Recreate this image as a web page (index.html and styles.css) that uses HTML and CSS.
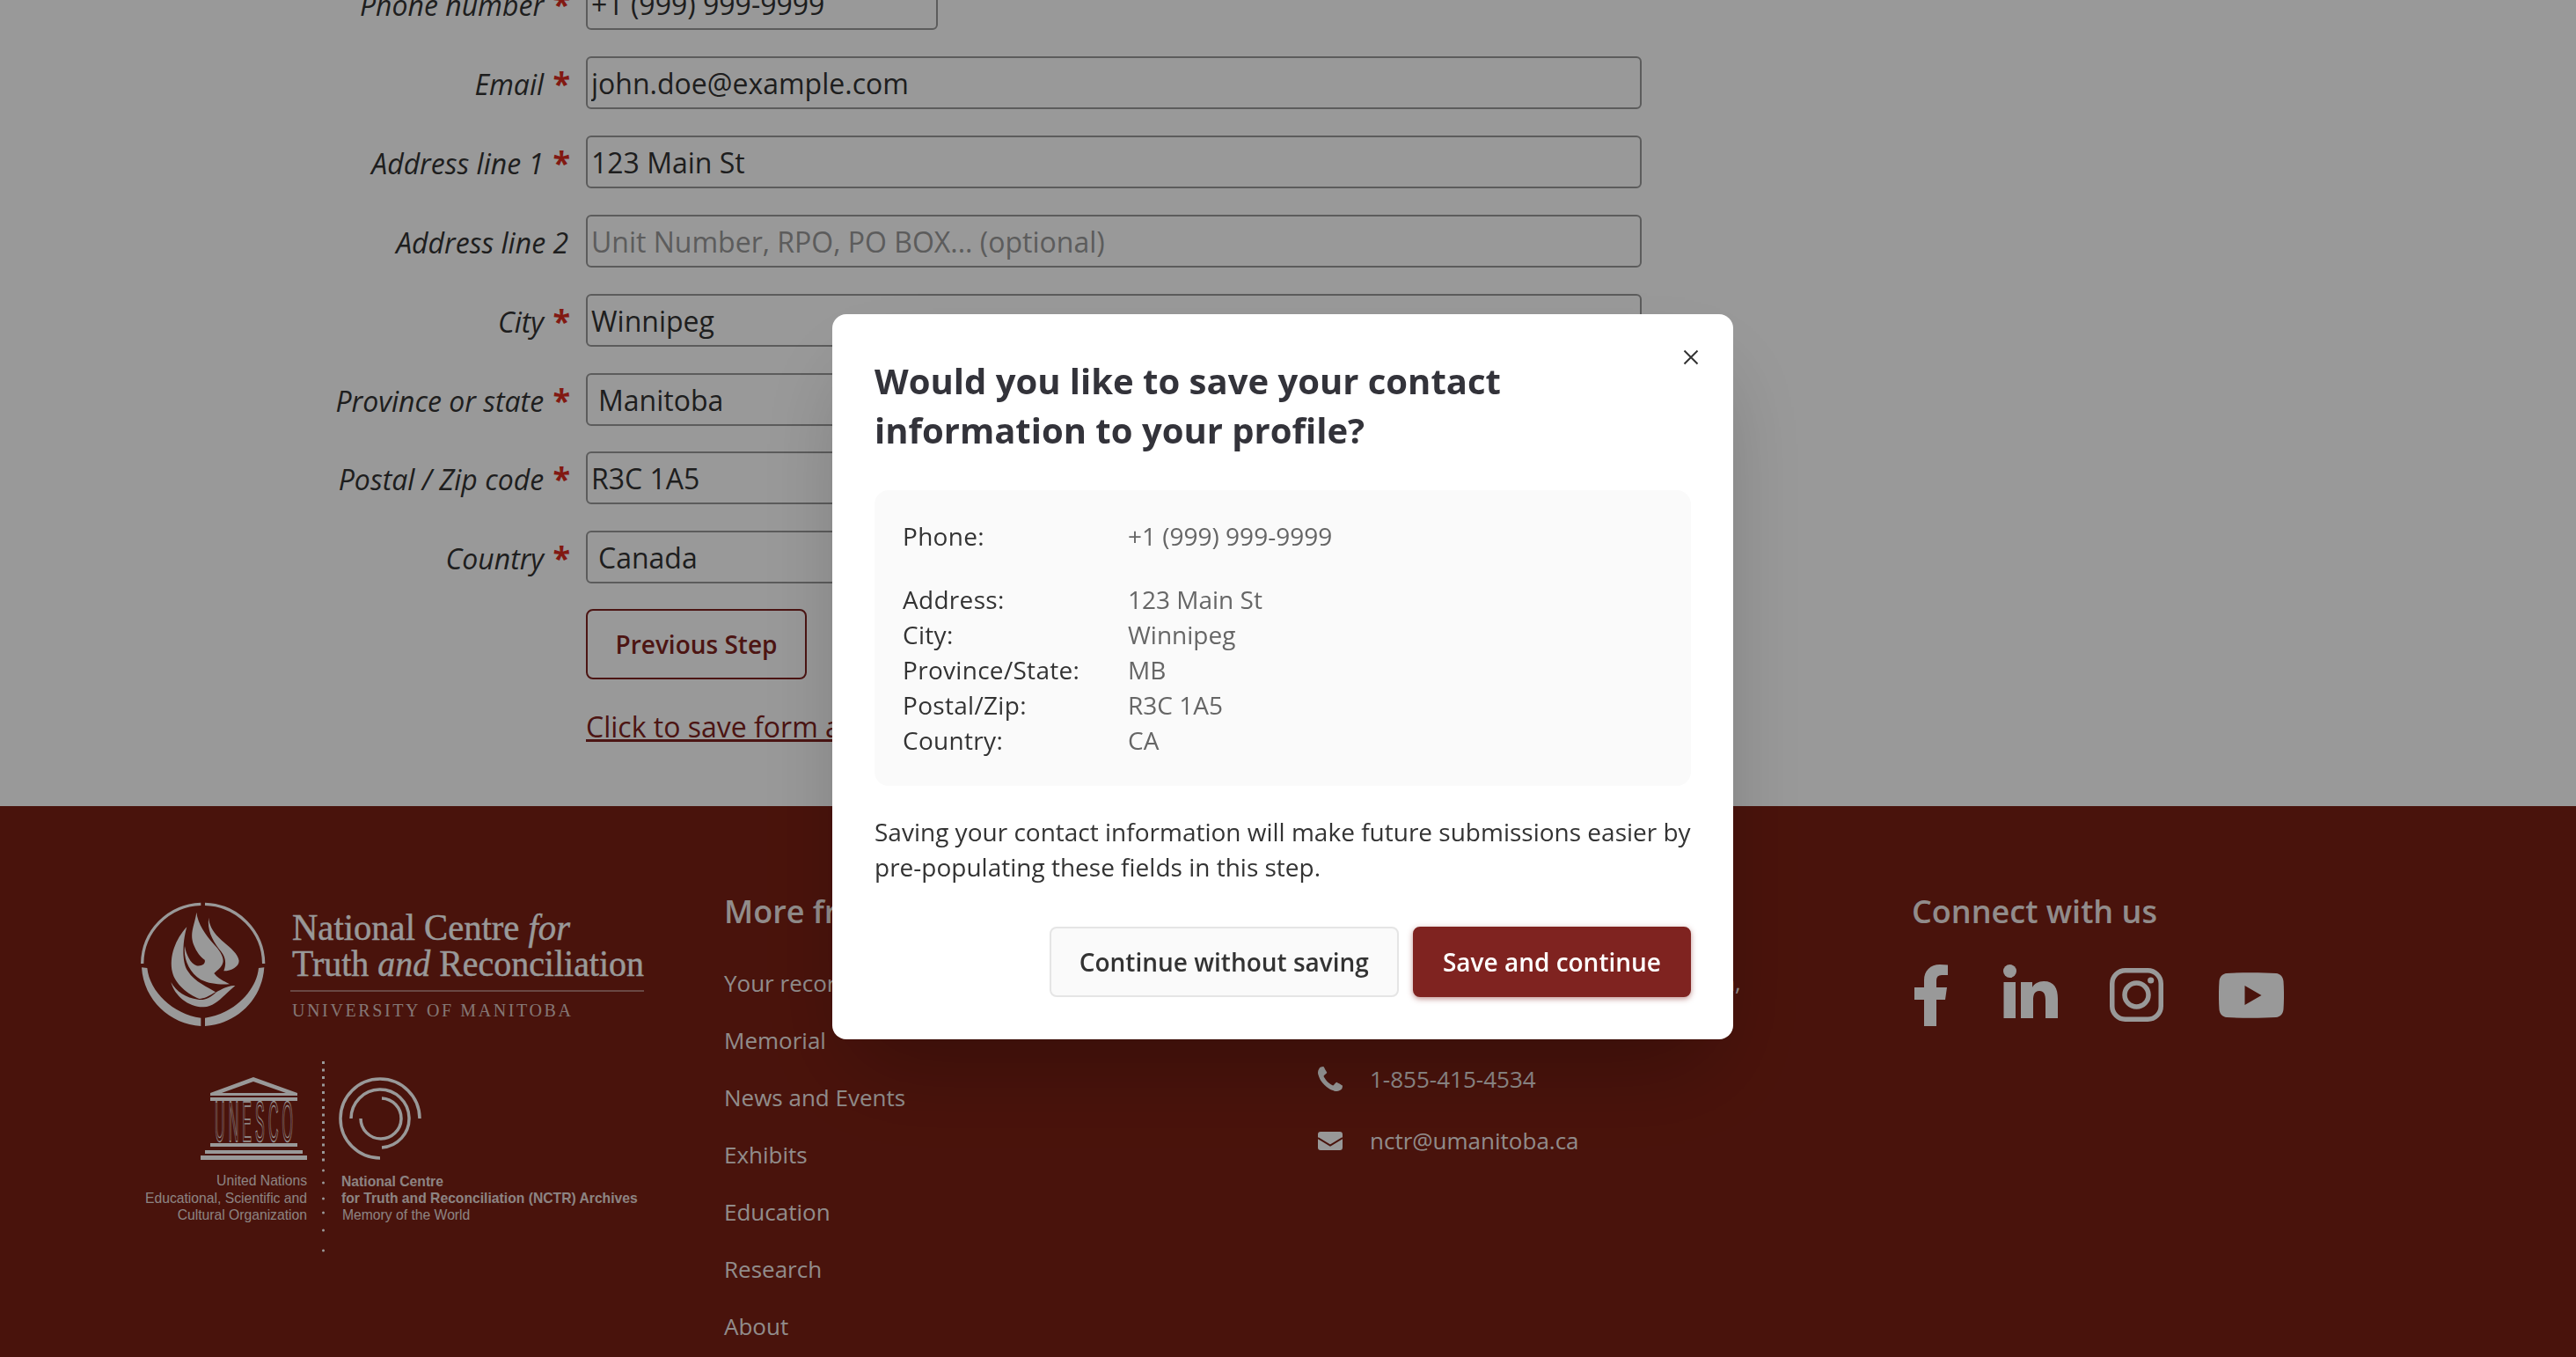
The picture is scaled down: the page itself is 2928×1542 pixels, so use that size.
FILE: index.html
```html
<!DOCTYPE html>
<html lang="en">
<head>
    <meta charset="UTF-8">
    <meta name="viewport" content="width=device-width, initial-scale=1.0">
    <title>Submission form - contact information</title>
    <link rel="stylesheet" href="styles.css">
</head>
<body>
    <main class="form-page">
        <form class="contact-form">
            <div class="form-row">
                <label class="form-label" for="phone">Phone number <span class="req">*</span></label>
                <input class="form-input form-input-short" id="phone" type="text" value="+1 (999) 999-9999">
            </div>
            <div class="form-row">
                <label class="form-label" for="email">Email <span class="req">*</span></label>
                <input class="form-input" id="email" type="text" value="john.doe@example.com">
            </div>
            <div class="form-row">
                <label class="form-label" for="addr1">Address line 1 <span class="req">*</span></label>
                <input class="form-input" id="addr1" type="text" value="123 Main St">
            </div>
            <div class="form-row">
                <label class="form-label" for="addr2">Address line 2</label>
                <input class="form-input" id="addr2" type="text" placeholder="Unit Number, RPO, PO BOX... (optional)">
            </div>
            <div class="form-row">
                <label class="form-label" for="city">City <span class="req">*</span></label>
                <input class="form-input" id="city" type="text" value="Winnipeg">
            </div>
            <div class="form-row form-row-tight">
                <label class="form-label" for="province">Province or state <span class="req">*</span></label>
                <select class="form-input form-select" id="province">
                    <option>Manitoba</option>
                </select>
            </div>
            <div class="form-row">
                <label class="form-label" for="postal">Postal / Zip code <span class="req">*</span></label>
                <input class="form-input" id="postal" type="text" value="R3C 1A5">
            </div>
            <div class="form-row">
                <label class="form-label" for="country">Country <span class="req">*</span></label>
                <select class="form-input form-select" id="country">
                    <option>Canada</option>
                </select>
            </div>
            <div class="form-actions">
                <button class="btn-previous" type="button">Previous Step</button>
                <a class="save-link" href="#">Click to save form and return to it later</a>
            </div>
        </form>
    </main>

    <footer class="site-footer">
        <div class="footer-logos">
            <svg class="logo-svg" viewBox="0 0 640 450" width="640" height="450">
                <!-- emblem -->
                <g transform="translate(30 20) scale(0.3333)">
                    <path class="logo-line" d="M5,225 A207,205 0 0 1 205,22"/>
                    <path class="logo-line" d="M219,22 A207,205 0 0 1 419,225"/>
                    <path d="M3,238 L22,240 C30,320 110,398 205,410 L205,438 C100,432 10,350 3,238Z"/>
                    <path d="M421,238 L402,240 C394,320 314,398 219,410 L219,438 C324,432 414,350 421,238Z"/>
                    <path d="M157,100 C120,140 95,200 108,255 C118,295 160,330 200,345 C215,345 235,335 255,322 C230,305 185,290 160,250 C142,225 140,160 157,100Z"/>
                    <path d="M103,288 C115,335 165,375 215,373 C255,372 280,335 322,300 C300,298 275,312 256,323 C240,340 215,352 195,347 C155,342 120,320 103,288Z"/>
                    <path d="M190,50 C185,90 165,120 180,160 C190,185 205,205 218,212 C222,225 210,235 190,232 C170,225 155,195 150,165 C145,210 165,255 205,280 C235,295 270,297 303,295 C285,285 262,275 250,258 C258,250 275,240 280,222 C285,205 270,180 250,160 C220,125 195,90 190,50Z"/>
                    <path d="M232,68 C225,110 245,150 275,185 C290,205 292,225 283,250 C310,250 335,235 335,215 C330,185 295,165 265,135 C245,115 232,90 232,68Z"/>
                </g>
                <text class="logo-name" x="202" y="68" textLength="316" lengthAdjust="spacingAndGlyphs">National Centre <tspan class="logo-em">for</tspan></text>
                <text class="logo-name" x="202" y="109" textLength="400" lengthAdjust="spacingAndGlyphs">Truth <tspan class="logo-em">and</tspan> Reconciliation</text>
                <rect class="logo-rule" x="200" y="125" width="402" height="2"/>
                <text class="logo-uni" x="202" y="155" textLength="317" lengthAdjust="spacing">UNIVERSITY OF MANITOBA</text>

                <!-- unesco temple -->
                <path d="M158,224 L208,242 V245 H109 V242Z M158,229 L122,242 H195Z" fill-rule="evenodd"/>
                <rect x="109" y="247" width="99" height="4"/>
                <text class="logo-unesco" x="114" y="73.300" textLength="89" lengthAdjust="spacing" transform="scale(1 4.050)">UNESCO</text>
                <rect x="109" y="299" width="99" height="4"/>
                <rect x="103" y="307" width="111" height="4"/>
                <rect x="98" y="313" width="121" height="5"/>

                <!-- dotted divider -->
                <line class="logo-dots" x1="237.5" y1="206" x2="237.5" y2="320"/>
                <circle cx="237.5" cy="330" r="1.5"/>
                <circle cx="237.5" cy="344" r="1.5"/>
                <circle cx="237.5" cy="362" r="1.5"/>
                <circle cx="237.5" cy="378" r="1.5"/>
                <circle cx="237.5" cy="398" r="1.5"/>
                <circle cx="237.5" cy="421" r="1.5"/>

                <!-- memory of the world -->
                <path class="logo-arc" d="M302,316 A45,45 0 1 1 347,271"/>
                <path class="logo-arc" d="M269,271 A33,33 0 1 1 304,304"/>
                <path class="logo-arc" d="M304,248 A23,23 0 1 1 280,271"/>

                <text class="logo-small logo-end" x="219" y="347">United Nations</text>
                <text class="logo-small logo-end" x="219" y="367">Educational, Scientific and</text>
                <text class="logo-small logo-end" x="219" y="386">Cultural Organization</text>
                <text class="logo-small logo-bold" x="258" y="348">National Centre</text>
                <text class="logo-small logo-bold" x="258" y="367">for Truth and Reconciliation (NCTR) Archives</text>
                <text class="logo-small" x="259" y="386">Memory of the World</text>
            </svg>
        </div>

        <div class="footer-col">
            <h3 class="footer-heading">More from NCTR</h3>
            <ul class="footer-links">
                <li><a href="#">Your records</a></li>
                <li><a href="#">Memorial</a></li>
                <li><a href="#">News and Events</a></li>
                <li><a href="#">Exhibits</a></li>
                <li><a href="#">Education</a></li>
                <li><a href="#">Research</a></li>
                <li><a href="#">About</a></li>
            </ul>
        </div>

        <div class="footer-col">
            <h3 class="footer-heading">Contact</h3>
            <ul class="footer-contact">
                <li>
                    <span class="contact-icon"></span>
                    <span class="contact-address">177 Dysart Rd, Winnipeg, Manitoba,<br>R3T 2N2</span>
                </li>
                <li>
                    <span class="contact-icon">
                        <svg viewBox="192 128 1408 1408" width="28" height="28"><path d="M1600 1240q0 27-10 70.5t-21 68.5q-21 50-122 106-94 51-186 51-27 0-53-3.5t-57.5-12.5-47-14.5-55.5-20.5-49-18q-98-35-175-83-127-79-264-216t-216-264q-48-77-83-175-3-9-18-49t-20.5-55.5-14.5-47-12.5-57.5-3.5-53q0-92 51-186 56-101 106-122 25-11 68.5-21t70.5-10q14 0 21 3 18 6 53 76 11 19 30 54t35 63.5 31 53.5q3 4 17.5 25t21.5 35.5 7 28.5q0 20-28.5 50t-62 55-62 53-28.5 46q0 9 5 22.5t8.5 20.5 14 24 11.5 19q76 137 174 235t235 174q2 1 19 11.5t24 14 20.5 8.5 22.5 5q18 0 46-28.5t53-62 55-62 50-28.5q14 0 28.5 7t35.5 21.5 25 17.5q25 15 53.5 31t63.5 35 54 30q70 35 76 53 3 7 3 21z"/></svg>
                    </span>
                    <span>1-855-415-4534</span>
                </li>
                <li>
                    <span class="contact-icon">
                        <svg viewBox="0 0 28 21" width="28" height="21"><rect width="28" height="21" rx="3"/><path class="mail-fold" d="M0,7 L14,15.5 L28,7"/></svg>
                    </span>
                    <span>nctr@umanitoba.ca</span>
                </li>
            </ul>
        </div>

        <div class="footer-col">
            <h3 class="footer-heading">Connect with us</h3>
            <div class="social-links">
                <a href="#" class="social-fb"><svg viewBox="0 0 38 70" width="38" height="70"><path d="M25,70 V40 H35 L37,26 H25 V18 Q25,12 31,12 H38 V0.5 Q34,0 29,0 C18,0 11,7 11,18 V26 H0 V40 H11 V70Z"/></svg></a>
                <a href="#" class="social-in"><svg viewBox="0 0 62 61" width="62" height="61"><circle cx="7.5" cy="7.5" r="7.5"/><rect x="0.5" y="20" width="13.5" height="41"/><path d="M20,20 H33 V26 C35,22 40,19 46,19 C58,19 62,27 62,39 V61 H48 V41 C48,35 47,30 41,30 C35,30 34,35 34,41 V61 H20Z"/></svg></a>
                <a href="#" class="social-ig"><svg viewBox="0 0 61 61" width="61" height="61"><rect class="ig-line" x="2.75" y="2.75" width="55.5" height="55.5" rx="15"/><circle class="ig-line" cx="30.5" cy="30.5" r="13.5"/><circle cx="46.7" cy="14" r="3.6"/></svg></a>
                <a href="#" class="social-yt"><svg viewBox="0 0 74 52" width="74" height="52"><path fill-rule="evenodd" d="M9,1 C25,0 49,0 65,1 C70,1.500 73,5 73.500,10 C74.200,20 74.200,32 73.500,42 C73,47 70,50.500 65,51 C49,52 25,52 9,51 C4,50.500 1,47 0.500,42 C-0.200,32 -0.200,20 0.500,10 C1,5 4,1.500 9,1Z M29.500,15 V37 L48.500,26Z"/></svg></a>
            </div>
        </div>
    </footer>

    <div class="modal-overlay">
        <div class="modal">
            <button class="modal-close" type="button" aria-label="Close">
                <svg viewBox="0 0 18 18" width="18" height="18"><path d="M1.500,1.500 L16.500,16.500 M16.500,1.500 L1.500,16.500"/></svg>
            </button>
            <h2 class="modal-title">Would you like to save your contact information to your profile?</h2>
            <div class="info-box">
                <dl class="info-list info-list-phone">
                    <dt>Phone:</dt><dd>+1 (999) 999-9999</dd>
                </dl>
                <dl class="info-list">
                    <dt>Address:</dt><dd>123 Main St</dd>
                    <dt>City:</dt><dd>Winnipeg</dd>
                    <dt>Province/State:</dt><dd>MB</dd>
                    <dt>Postal/Zip:</dt><dd>R3C 1A5</dd>
                    <dt>Country:</dt><dd>CA</dd>
                </dl>
            </div>
            <p class="modal-text">Saving your contact information will make future submissions easier by pre-populating these fields in this step.</p>
            <div class="modal-buttons">
                <button class="btn-secondary" type="button">Continue without saving</button>
                <button class="btn-primary" type="button">Save and continue</button>
            </div>
        </div>
    </div>
</body>
</html>
```

FILE: styles.css
```css
* {
    box-sizing: border-box;
}

html, body {
    height: 1542px;
    margin: 0;
    overflow: hidden;
}

body {
    background-color: #fff;
    color: #333;
    font-family: "Open Sans", "Noto Sans", sans-serif;
}

/* form behind the dialog */
.form-page {
    height: 942px;
    margin-top: -26px;
}

.form-row {
    display: flex;
    gap: 20px;
    height: 60px;
    margin-bottom: 30px;
}

.form-row-tight {
    margin-bottom: 29px;
}

.form-label {
    width: 646px;
    height: 60px;
    padding-top: 2px;
    font-size: 32px;
    font-style: italic;
    line-height: 60px;
    text-align: right;
    white-space: nowrap;
}

.req {
    margin-left: 2px;
    margin-right: -2px;
    color: #d92b1e;
    font-style: normal;
    font-weight: 700;
    font-size: 36px;
    line-height: 1;
}

.form-input {
    width: 1200px;
    height: 60px;
    padding: 0 4px;
    border: 2px solid #999;
    border-radius: 6px;
    background: #fff;
    color: #333;
    font-family: inherit;
    font-size: 32px;
}

.form-input::placeholder {
    color: #999;
}

.form-input-short {
    width: 400px;
}

.form-select {
    padding-left: 12px;
    appearance: none;
}

.form-actions {
    margin-top: -1px;
    padding-left: 666px;
}

.btn-previous {
    display: block;
    width: 251px;
    height: 80px;
    border: 2px solid #7f2320;
    border-radius: 8px;
    background: transparent;
    color: #7f2320;
    font-family: inherit;
    font-size: 28px;
    font-weight: 600;
}

.save-link {
    display: inline-block;
    margin-top: 32px;
    color: #7f2320;
    font-size: 32px;
    line-height: 44px;
    text-decoration-thickness: 3px;
}

/* footer */
.site-footer {
    display: grid;
    grid-template-columns: 693px 674px 676px auto;
    height: 800px;
    padding: 84px 0 0 130px;
    background-color: #7b2014;
    color: rgba(255, 255, 255, 0.92);
}

.logo-svg {
    display: block;
    fill: #fff;
}

.logo-line {
    fill: none;
    stroke: #fff;
    stroke-width: 10;
}

.logo-name {
    font-family: "Liberation Serif", serif;
    font-size: 42px;
    stroke: #fff;
    stroke-width: 0.4;
}

.logo-em {
    font-style: italic;
}

.logo-rule {
    fill: rgba(255, 255, 255, 0.4);
}

.logo-uni {
    font-family: "Liberation Serif", serif;
    font-size: 20px;
    fill: rgba(255, 255, 255, 0.75);
}

.logo-unesco {
    font-family: "Liberation Sans", sans-serif;
    font-size: 16px;
    fill: none;
    stroke: #fff;
    stroke-width: 1;
    vector-effect: non-scaling-stroke;
}

.logo-dots {
    stroke: #fff;
    stroke-width: 3;
    stroke-dasharray: 3 5.500;
}

.logo-arc {
    fill: none;
    stroke: #fff;
    stroke-width: 3.500;
}

.logo-small {
    font-family: "Liberation Sans", sans-serif;
    font-size: 15.700px;
    fill: rgba(255, 255, 255, 0.85);
}

.logo-end {
    text-anchor: end;
}

.logo-bold {
    font-weight: 700;
}

.footer-heading {
    margin: 11px 0 24px;
    font-size: 36px;
    font-weight: 600;
    line-height: 50px;
}

.footer-links,
.footer-contact {
    list-style: none;
    margin: 0;
    padding: 0;
    font-size: 26px;
}

.footer-links a {
    display: block;
    color: inherit;
    line-height: 65px;
    text-decoration: none;
}

.footer-contact {
    display: flex;
    flex-direction: column;
    gap: 30px;
    padding-top: 11px;
    line-height: 40px;
}

.footer-contact li {
    display: flex;
}

.contact-icon {
    display: flex;
    align-items: center;
    width: 59px;
    height: 40px;
    margin-left: 1px;
    fill: #fff;
}

.contact-address {
    letter-spacing: -0.3px;
    white-space: nowrap;
}

.mail-fold {
    fill: none;
    stroke: #7b2014;
    stroke-width: 2;
}

.social-links {
    display: flex;
    align-items: flex-start;
    padding-top: 11px;
}

.social-links svg {
    display: block;
    fill: #fff;
}

.social-fb {
    margin-left: 3px;
    margin-right: 63px;
}

.social-in {
    margin-right: 59px;
}

.social-ig {
    margin-top: 4px;
    margin-right: 63px;
}

.social-yt {
    margin-top: 9px;
}

.ig-line {
    fill: none;
    stroke: #fff;
    stroke-width: 5.500;
}

/* dialog */
.modal-overlay {
    position: fixed;
    inset: 0;
    display: flex;
    align-items: center;
    justify-content: center;
    padding: 0 12px 4px 0;
    background-color: rgba(0, 0, 0, 0.4);
}

.modal {
    position: relative;
    width: 1024px;
    padding: 48px;
    border-radius: 16px;
    background-color: #fff;
    box-shadow: 0 50px 100px -24px rgba(0, 0, 0, 0.25);
}

.modal-close {
    position: absolute;
    top: 40px;
    right: 39px;
    display: flex;
    padding: 0;
    border: 0;
    background: none;
}

.modal-close path {
    fill: none;
    stroke: #333;
    stroke-width: 2;
}

.modal-title {
    width: 800px;
    margin: 0 0 40px;
    color: #33333a;
    font-size: 40px;
    font-weight: 700;
    line-height: 56px;
}

.info-box {
    padding: 32px;
    border-radius: 16px;
    background-color: #fafafa;
}

.info-list {
    display: grid;
    grid-template-columns: 256px 1fr;
    margin: 0;
    font-size: 28px;
    line-height: 40px;
}

.info-list-phone {
    margin-bottom: 32px;
}

.info-list dt {
    color: #333;
    font-weight: 500;
    letter-spacing: 0.3px;
}

.info-list dd {
    margin: 0;
    color: #666;
}

.modal-text {
    margin: 32px 0 48px;
    color: #333;
    font-size: 28px;
    line-height: 40px;
}

.modal-buttons {
    display: flex;
    justify-content: flex-end;
    gap: 16px;
}

.btn-secondary,
.btn-primary {
    height: 80px;
    padding: 0 32px;
    border-radius: 8px;
    font-family: inherit;
    font-size: 28px;
    font-weight: 600;
}

.btn-secondary {
    border: 2px solid #e5e5e5;
    background-color: #fafafa;
    color: #333;
}

.btn-primary {
    border: 2px solid #7f2320;
    background-color: #7f2320;
    color: #fff;
    box-shadow: 0 2px 6px rgba(127, 35, 32, 0.5);
}
```
